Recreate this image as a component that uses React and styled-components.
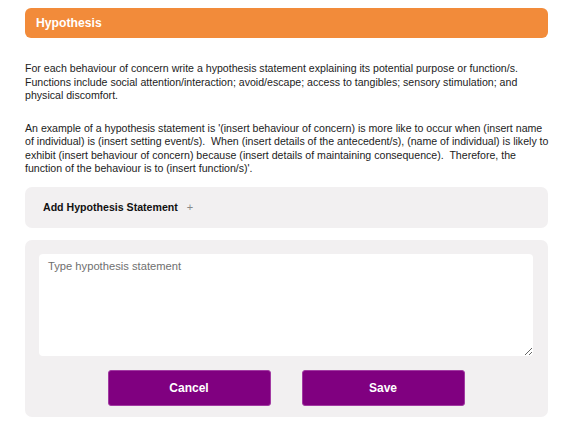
import React from "react";
import styled, { createGlobalStyle } from "styled-components";

const Global = createGlobalStyle`
  html, body { margin: 0; padding: 0; background: #ffffff; }
  body { font-family: "Liberation Sans", Arial, Helvetica, sans-serif; color: #1c1c1c; }
  * { box-sizing: border-box; }
`;

const Page = styled.div`
  padding: 8px 26px 14px 25px;
  display: flex;
  flex-direction: column;
`;

const Header = styled.div`
  height: 30px;
  background: #f28b3a;
  border-radius: 6px;
  display: flex;
  align-items: center;
  padding: 0 11px;
  color: #ffffff;
  font-weight: 700;
  font-size: 12.2px;
`;

const Para = styled.p`
  margin: ${(p) => p.$top}px 0 0 0;
  font-size: 10.6px;
  line-height: 13.5px;
  color: #1c1c1c;
  white-space: nowrap;
`;

const AddBox = styled.div`
  margin-top: 11px;
  height: 41px;
  background: #f2f0f1;
  border-radius: 7px;
  display: flex;
  align-items: center;
  padding: 0 18px;
  gap: 9px;
  font-size: 10.6px;
  font-weight: 700;
  color: #111;
`;

const Plus = styled.span`
  font-weight: 400;
  color: #888;
  font-size: 11px;
`;

const FormBox = styled.div`
  margin-top: 12px;
  background: #f2f0f1;
  border-radius: 7px;
  padding: 14px 15px 11px 14px;
  display: flex;
  flex-direction: column;
  gap: 14px;
`;

const TextArea = styled.textarea`
  display: block;
  width: 100%;
  height: 102px;
  border: none;
  border-radius: 4px;
  background: #ffffff;
  padding: 6px 9px;
  font-family: "Liberation Sans", Arial, sans-serif;
  font-size: 11.2px;
  color: #333;
  resize: vertical;
  outline: none;
  &::placeholder { color: #6f6f6f; }
`;

const Buttons = styled.div`
  display: flex;
  justify-content: center;
  gap: 31px;
`;

const Button = styled.button`
  width: 163px;
  height: 36px;
  border: 1px solid #a23aa2;
  border-radius: 3px;
  background: #800080;
  color: #ffffff;
  font-family: "Liberation Sans", Arial, sans-serif;
  font-weight: 700;
  font-size: 12px;
  cursor: pointer;
`;

export default function App() {
  return (
    <>
      <Global />
      <Page>
        <Header>Hypothesis</Header>
        <Para $top={24}>
          For each behaviour of concern write a hypothesis statement explaining its potential purpose or function/s.
          <br />
          Functions include social attention/interaction; avoid/escape; access to tangibles; sensory stimulation; and
          <br />
          physical discomfort.
        </Para>
        <Para $top={19}>
          An example of a hypothesis statement is '(insert behaviour of concern) is more like to occur when (insert name
          <br />
          of individual) is (insert setting event/s).&nbsp; When (insert details of the antecedent/s), (name of individual) is likely to
          <br />
          exhibit (insert behaviour of concern) because (insert details of maintaining consequence).&nbsp; Therefore, the
          <br />
          function of the behaviour is to (insert function/s)'.
        </Para>
        <AddBox>
          Add Hypothesis Statement <Plus>+</Plus>
        </AddBox>
        <FormBox>
          <TextArea placeholder="Type hypothesis statement" />
          <Buttons>
            <Button>Cancel</Button>
            <Button>Save</Button>
          </Buttons>
        </FormBox>
      </Page>
    </>
  );
}
